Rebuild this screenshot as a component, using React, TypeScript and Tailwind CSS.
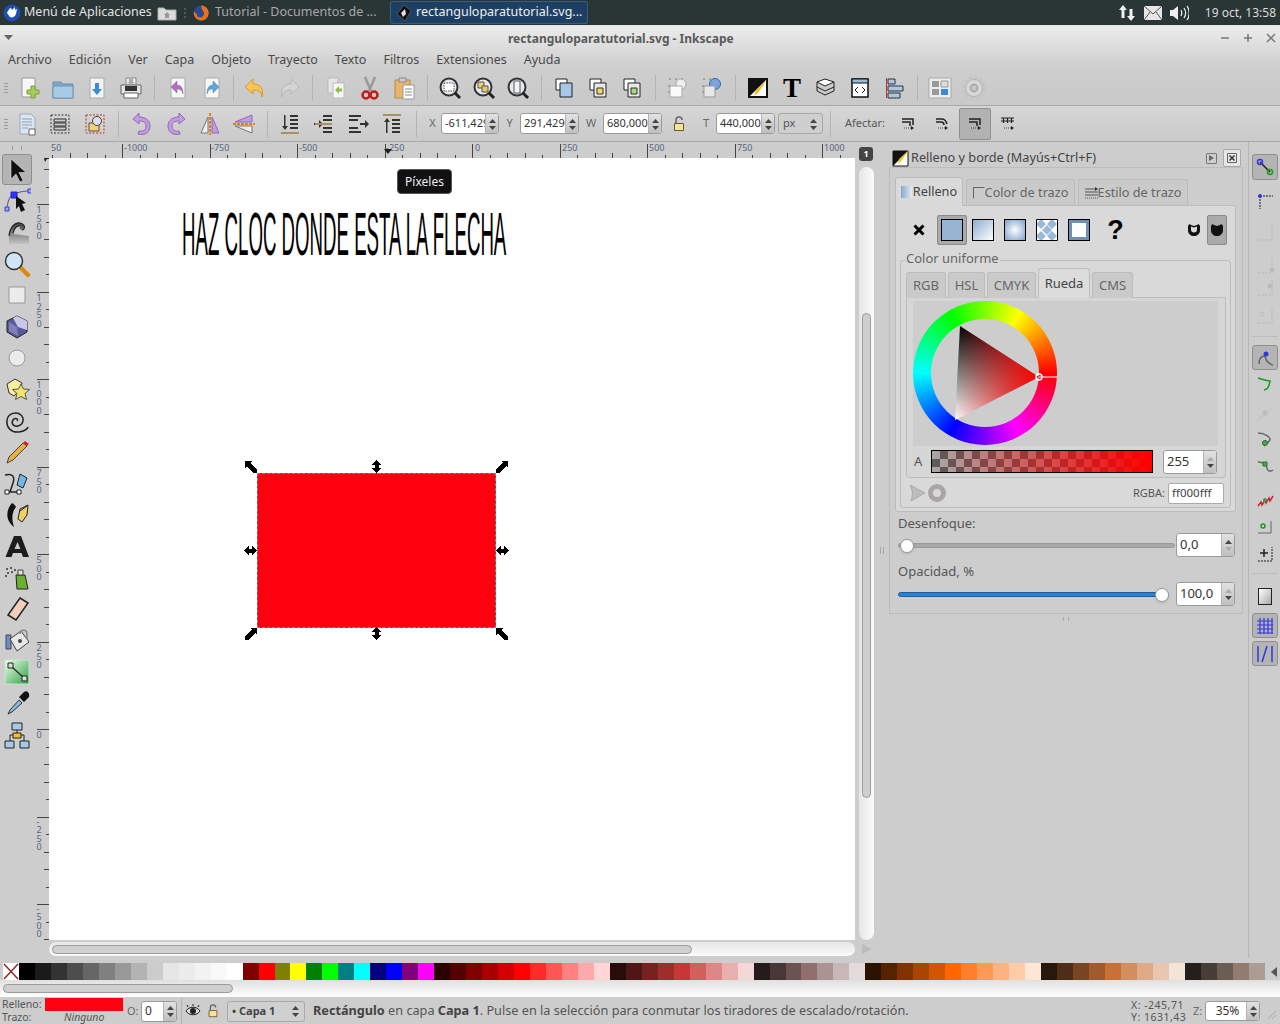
import React from 'react';

const Ic = ({ s = 24, children }: { s?: number; children: React.ReactNode }) => (
  <svg width={s} height={s} viewBox={`0 0 ${s} ${s}`} className="block shrink-0">{children}</svg>
);

const Tool = ({ children, w = 'w-[34px]' }: { children: React.ReactNode; w?: string }) => (
  <div className={`${w} h-full flex items-center justify-center shrink-0`}>{children}</div>
);

const Sep = ({ w = 'w-[12px]' }: { w?: string }) => (
  <div className={`${w} h-full flex items-center justify-center shrink-0`}>
    <div className="w-px h-[26px] bg-[#b4b4b4]" />
  </div>
);

const Grip = () => (
  <div className="w-[12px] shrink-0 flex flex-col gap-[2px] items-center">
    <div className="w-[4px] h-px bg-[#9a9a9a]" />
    <div className="w-[4px] h-px bg-[#9a9a9a]" />
    <div className="w-[4px] h-px bg-[#9a9a9a]" />
    <div className="w-[4px] h-px bg-[#9a9a9a]" />
  </div>
);

const Arrows = ({ dim = '' }: { dim?: string }) => (
  <svg width="9" height="16" viewBox="0 0 9 16" className="block">
    <path d="M4.5 3 L8 7 H1 Z" fill={dim === 'up' ? '#aaa' : '#444'} />
    <path d="M1 10 H8 L4.5 14 Z" fill={dim === 'down' ? '#aaa' : '#444'} />
  </svg>
);

const Spin = ({ text, w, h = 'h-[21px]', dim = '', cls = 'text-[11px]' }: { text: string; w: string; h?: string; dim?: string; cls?: string }) => (
  <div className={`${w} ${h} flex border border-[#9b9b9b] rounded-[3px] overflow-hidden shrink-0 bg-white`}>
    <div className={`flex-1 min-w-0 overflow-hidden whitespace-nowrap pl-[3px] flex items-center text-[#333] ${cls}`}>{text}</div>
    <div className="w-[13px] shrink-0 border-l border-[#b5b5b5] bg-gradient-to-b from-[#e2e2e2] to-[#bfbfbf] flex items-center justify-center">
      <Arrows dim={dim} />
    </div>
  </div>
);

// top toolbar icons
const NewDoc = () => (
  <Ic><path d="M5 2h13v19H5z" fill="#f7f7f7" stroke="#9a9a9a" /><path d="M14 12h4v4h4v4h-4v4h-4v-4h-4v-4h4z" transform="translate(0 -2)" fill="#a6cf5a" stroke="#7d9e3a" /></Ic>
);
const Folder = () => (
  <Ic><path d="M2 6h8l2 2h10v14H2z" fill="#7ba8cc" stroke="#6a8eaa" /><path d="M2 10h20v12H2z" fill="#a9cbe4" stroke="#6d94b3" /></Ic>
);
const Save = () => (
  <Ic><path d="M5 2h14v20H5z" fill="#f4f4f4" stroke="#aaa" /><path d="M10 7h4v6h3l-5 6-5-6h3z" fill="#3c8ad8" /></Ic>
);
const Printer = () => (
  <Ic><path d="M7 2h10v7H7z" fill="#eee" stroke="#888" /><path d="M2 9h20v9H2z" fill="#e4e4e4" stroke="#666" /><path d="M6 10h12v5H6z" fill="#333" /><path d="M5 17h14v5H5z" fill="#fff" stroke="#666" /><path d="M10 3h4v3h2l-4 3-4-3h2z" fill="#aaa" /></Ic>
);
const DocArrow = ({ c, flip }: { c: string; flip?: boolean }) => (
  <Ic><path d="M5 2h14v20H5z" fill="#f6f6f6" stroke="#aaa" /><path d={flip ? 'M13 5l6 6-6 6v-4c-3 0-5 1-6 5 0-6 2-9 6-9z' : 'M11 5l-6 6 6 6v-4c3 0 5 1 6 5 0-6-2-9-6-9z'} fill={c} stroke="#666" strokeWidth=".4" /></Ic>
);
const Undo = () => (
  <Ic><path d="M10 3L2 11l8 7v-4c5 0 8 1 9 7 2-7-1-13-9-13z" fill="#f7c456" stroke="#d59a2a" /></Ic>
);
const Redo = () => (
  <Ic><path d="M14 3l8 8-8 7v-4c-5 0-8 1-9 7-2-7 1-13 9-13z" fill="#d4d4d4" stroke="#b8b8b8" /></Ic>
);
const Duplicate = () => (
  <Ic><path d="M4 2h10v15H4z" fill="#e6e6e6" stroke="#bbb" /><path d="M9 7h11v15H9z" fill="#f7f7f7" stroke="#bbb" /><path d="M11 14l4-4v2.500h3v3h-3V18z" fill="#8cc04a" /></Ic>
);
const Scissors = () => (
  <Ic><path d="M7 1l6 14M17 1l-6 14" stroke="#999" strokeWidth="2.500" /><circle cx="8" cy="19" r="3.500" fill="none" stroke="#c41a1a" strokeWidth="2.500" /><circle cx="16" cy="19" r="3.500" fill="none" stroke="#c41a1a" strokeWidth="2.500" /></Ic>
);
const Paste = () => (
  <Ic><path d="M3 4h15v18H3z" fill="#e9b56a" stroke="#b78a44" /><path d="M7 2h7v4H7z" fill="#ccc" stroke="#888" /><path d="M11 9h11v14H11z" fill="#fff" stroke="#999" /><path d="M13 13h7M13 16h7M13 19h7" stroke="#888" /></Ic>
);
const Zoom = ({ children }: { children: React.ReactNode }) => (
  <Ic>
    <circle cx="11" cy="11" r="8.500" fill="#e4eaf0" stroke="#333" strokeWidth="2" />
    {children}
    <path d="M17 17l5 5" stroke="#222" strokeWidth="3" />
  </Ic>
);
const Stack = ({ c, mark }: { c: string; mark?: string }) => (
  <Ic>
    <path d="M4 3h11v11H4z" fill="#fff" stroke="#222" />
    <path d="M8 7h12v14H8z" fill={c} stroke="#222" />
    {mark && <path d="M11 12h6v6h-6z" fill={mark} stroke="#333" />}
  </Ic>
);
const Gear = () => (
  <Ic>
    <circle cx="12" cy="12" r="8.500" fill="#d8d8d8" stroke="#b4b4b4" />
    <circle cx="12" cy="12" r="10.500" fill="none" stroke="#c4c4c4" strokeWidth="2.500" strokeDasharray="3.500 2" />
    <circle cx="12" cy="12" r="3.500" fill="#c8c8c8" stroke="#a4a4a4" strokeWidth="1.500" />
  </Ic>
);

// second toolbar
const Rotate = ({ flip }: { flip?: boolean }) => (
  <Ic>
    <g transform={flip ? 'translate(24 0) scale(-1 1)' : undefined}>
      <path d="M9 1L3 7l6 5V9c4 0 7 1 7 5s-3 6-7 5l-1 3c7 2 12-2 12-8S15 5 9 5z" fill="#c29be0" stroke="#8f6bb3" />
    </g>
  </Ic>
);
const AlignI = ({ flip }: { flip?: boolean }) => (
  <Ic>
    <g fill="#333" transform={flip ? 'translate(0 24) scale(1 -1)' : undefined}>
      <path d="M12 3h8v2h-8zM12 7h8v2h-8zM12 11h8v2h-8zM12 15h8v2h-8z" />
      <path d="M6 3h1.500v11H10l-3 4-3-4h2z" />
      <path d="M3 20h18v2H3z" fill="#a89060" />
    </g>
  </Ic>
);
const Lock = ({ s = 16 }: { s?: number }) => (
  <svg width={s} height={s} viewBox="0 0 16 16" className="block shrink-0">
    <path d="M5 7V4a3 3 0 0 1 6 0" fill="none" stroke="#666" strokeWidth="1.500" />
    <path d="M3.500 7.500h9v7h-9z" fill="#f4e4a0" stroke="#6a5a20" />
  </svg>
);
const Affect = ({ grid, curve }: { grid?: boolean; curve?: boolean }) => (
  <Ic s={16}>
    {grid ? (
      <path d="M1 2h13M1 5h13M3.500 2v5M7.500 2v5M11.500 2v5" stroke="#222" strokeWidth="1.200" />
    ) : (
      <>
        <path d={curve ? 'M2 3h6c3 0 4 2 5 5' : 'M2 3h11v6'} fill="none" stroke="#222" strokeWidth="1.500" />
        <path d={curve ? 'M2 6h5c2 0 3 1 3 3' : 'M2 6h8v4'} fill="none" stroke="#222" strokeWidth="1.500" />
      </>
    )}
    <path d="M4 12h7" stroke="#444" strokeDasharray="1 1" />
    <path d="M11 10l3 2-3 2z" fill="#222" />
  </Ic>
);

// left tools
const toolIcons: React.ReactNode[] = [
  <Ic s={26} key="sel"><path d="M7 2v20l5-5 4 8 3-1.500-4-8h7z" fill="#111" stroke="#eee" strokeWidth=".5" /></Ic>,
  <Ic s={28} key="node"><path d="M4 22C5 12 7 8 12 7c4-2 8-3 15-3" fill="none" stroke="#555" /><path d="M8 5h6v6H8z" fill="#33f" stroke="#22c" /><path d="M2 20h4v4H2zM25 2h4v4h-4z" fill="#aab" stroke="#33f" /><path d="M13 9l10 7-4 1 3 6-4 2-2-6-3 3z" fill="#111" /></Ic>,
  <Ic s={28} key="tweak"><defs><linearGradient id="tw" x1="0" y1="0" x2="0" y2="1"><stop offset="0" stopColor="#444" /><stop offset="1" stopColor="#c4c4c4" /></linearGradient></defs><path d="M6 18C7 9 12 4 17 5c5 1 6 6 2 7-3 0-3-3-1-4-4-1-7 3-7 8l15 2v8H6z" fill="url(#tw)" /><path d="M6 18C7 9 12 4 17 5c5 1 6 6 2 7M10 15C11 10 14 7 18 8" fill="none" stroke="#222" strokeWidth="1.200" /></Ic>,
  <Ic s={28} key="zoom"><path d="M17 17l8 8" stroke="#d98a10" strokeWidth="4.500" strokeLinecap="round" /><circle cx="11" cy="11" r="8.500" fill="#d2e4f7" stroke="#333" strokeWidth="1.500" /></Ic>,
  <Ic s={22} key="rect"><path d="M3 3h16v16H3z" fill="#ececec" stroke="#999" /></Ic>,
  <Ic s={26} key="box"><path d="M13 2l10 5v11l-10 6-10-6V7z" fill="#5a5a9a" stroke="#222" /><path d="M13 2l10 5v9l-9-3-5-9z" fill="#c8c8e8" /><path d="M5 8l8 5 1 9-9-5z" fill="#8080b8" /></Ic>,
  <Ic s={22} key="circle"><circle cx="11" cy="11" r="8" fill="#ececec" stroke="#999" /></Ic>,
  <Ic s={26} key="star"><path d="M3 8l8-5 7 4-1 5-7 8-5-3z" fill="#f8f0a0" stroke="#333" /><path d="M17 8l2.500 5 6 .5-4.500 4 1.500 6-5.500-3-5.500 3 1.500-6-4.500-4 6-.5z" fill="#f4e46c" stroke="#555" /></Ic>,
  <Ic s={26} key="spiral"><path d="M13 13c2-2-2-4-4-1s0 7 5 6 7-7 3-11S4 5 3 12s4 13 12 12 9-5 9-5" fill="none" stroke="#222" strokeWidth="1.500" /></Ic>,
  <Ic s={26} key="pencil"><path d="M3 24l2-6L19 4l4 3L9 21z" fill="#e8b040" stroke="#444" /><path d="M19 4l2-2 4 3-2 2z" fill="#d22" /></Ic>,
  <Ic s={28} key="pen"><path d="M2 5c8-2 10 2 8 8s-3 9-3 9h8" fill="none" stroke="#222" strokeWidth="1.500" /><path d="M2 20h4v4H2zM14 20h4v4h-4z" fill="#fff" stroke="#222" /><path d="M17 4l7 4-4 10-6-3z" fill="#6fb8e8" stroke="#222" /></Ic>,
  <Ic s={28} key="callig"><path d="M9 2C2 10 3 20 11 26c-2-6-3-14 2-20C12 4 11 3 9 2z" fill="#111" /><path d="M15 18l2-10 8-4-1 10-5 7z" fill="#f0d060" stroke="#222" /><path d="M17 10l7-5" stroke="#222" /></Ic>,
  <Ic s={28} key="text"><path d="M11 4h7l8 21h-6l-1.500-4H10l-1.500 4H2.500z" fill="#1c1c1c" /><path d="M14.500 10l-3 7h6z" fill="#c8c8c8" /></Ic>,
  <Ic s={28} key="spray"><g fill="#333"><circle cx="4" cy="5" r="1" /><circle cx="8" cy="4" r="1" /><circle cx="5" cy="9" r="1" /><circle cx="9" cy="8" r="1" /><circle cx="12" cy="6" r="1" /><circle cx="3" cy="12" r="1" /></g><path d="M13 11h9l3 14h-11z" fill="#6cb030" stroke="#222" /><path d="M15 6h5v5h-5z" fill="#e0e0e0" stroke="#444" /></Ic>,
  <Ic s={26} key="eraser"><path d="M16 2l8 5-12 17-8-5z" fill="#f4cdbd" stroke="#222" strokeWidth="1.500" /></Ic>,
  <Ic s={28} key="bucket"><path d="M3 8h5v14H3z" fill="#6a90c0" stroke="#445" /><path d="M7 12l11-8 8 11-12 9z" fill="#e8e8e8" stroke="#444" /><circle cx="17" cy="14" r="2" fill="#444" /><path d="M17 7c0-5 7-5 7 0v5" fill="none" stroke="#888" strokeWidth="1.500" /></Ic>,
  <Ic s={28} key="grad"><defs><linearGradient id="gr" x1="0" y1="0" x2="1" y2="1"><stop offset="0" stopColor="#f0fff0" /><stop offset="1" stopColor="#28a040" /></linearGradient></defs><path d="M2 2h24v24H2z" fill="url(#gr)" stroke="#c8e8c8" /><path d="M8 8l13 12" stroke="#333" strokeWidth="1.500" /><path d="M5 5h5v5H5zM19 18h5v5h-5z" fill="#ddd" stroke="#222" /></Ic>,
  <Ic s={26} key="drop"><path d="M15 10l-9 10-2 4 4-2 10-9z" fill="#88b8e8" stroke="#333" /><path d="M15 7l5 5 5-5c1-4-2-7-5-5z" fill="#111" /></Ic>,
  <Ic s={28} key="conn"><path d="M14 8v6M7 20v-6h14v6" fill="none" stroke="#222" /><path d="M9 2h10v7H9z" fill="#a8c8e8" stroke="#222" /><path d="M10 12h8v5h-8z" fill="#f4c020" stroke="#222" /><path d="M2 20h9v7H2zM17 20h9v7h-9z" fill="#a8c8e8" stroke="#222" /></Ic>,
];

// right snap bar
const snapBlue = '#3434e0';
const SnapCorner = ({ node }: { node?: React.ReactNode }) => (
  <Ic s={20}>
    <path d="M3 18h14V3" fill="none" stroke="#bcbcbc" strokeWidth="1.500" strokeDasharray="2 1.500" />
    {node}
  </Ic>
);
const Arc = ({ d, stroke = '#1a9a1a', node }: { d: string; stroke?: string; node?: React.ReactNode }) => (
  <Ic s={20}>
    <path d={d} fill="none" stroke={stroke} strokeWidth="1.500" />
    {node}
  </Ic>
);

const SnapBtn = ({ y, children, on }: { y: string; children: React.ReactNode; on?: boolean }) => (
  <div className={`${y} w-[26px] flex items-center justify-center rounded-[3px] shrink-0 ${on ? 'bg-[#b4b4b4] border border-[#8f8f8f]' : ''}`}>
    {children}
  </div>
);

const Ruler = () => {
  const ticks: React.ReactNode[] = [];
  for (let i = -4; i < 44; i++) {
    const x = 73 + i * 17.5;
    const top = i % 5 === 0 ? 2 : i % 5 === 1 || i % 5 === -4 || i % 5 === 4 || i % 5 === -1 ? 13 : 11;
    ticks.push(<path key={i} d={`M${Math.round(x) + 0.5} ${top}V16`} stroke="#444" />);
  }
  const labels = [['50', 2], ['-1000', 75], ['-750', 162], ['-500', 250], ['-250', 337], ['0', 426], ['250', 513], ['500', 600], ['750', 688], ['1000', 775]] as const;
  return (
    <svg width="806" height="16" className="block">
      {ticks}
      {labels.map(([t, x]) => (
        <text key={t} x={x} y="9" fontSize="9" fill="#5a6680" fontFamily="Noto Sans">{t}</text>
      ))}
      <path d="M335 7h8l-4 5z" fill="#222" />
    </svg>
  );
};

const VRuler = () => {
  const ticks: React.ReactNode[] = [];
  for (let i = -2; i < 44; i++) {
    const y = 46 + i * 17.5;
    const left = i % 5 === 0 ? 4 : i % 5 === 1 || i % 5 === -1 || i % 5 === 4 || i % 5 === -4 ? 13 : 11;
    ticks.push(<path key={i} d={`M${left} ${Math.round(y) + 0.5}H16`} stroke="#444" />);
  }
  const labels: [string, number][] = [['1500', 46], ['1250', 134], ['1000', 221], ['750', 309], ['500', 396], ['250', 484], ['0', 571], ['-250', 659], ['-500', 746]];
  return (
    <svg width="16" height="782" className="block shrink-0">
      {ticks}
      {labels.map(([t, y]) => {
        const start = t.startsWith('-') ? y + 7.5 : y + 9;
        const xs = t.split('').map(() => '3.500').join(' ');
        const ys = t.split('').map((_, i) => start + i * 8.5).join(' ');
        return <text key={t} x={xs} y={ys} fontSize="9" fill="#5a6680" fontFamily="Noto Sans">{t}</text>;
      })}
      <path d="M11 0h5v1l-2 0-2 3z" fill="#222" />
    </svg>
  );
};

const HandleDiag = ({ flip, cls }: { flip?: boolean; cls: string }) => (
  <div className={`absolute ${cls}`}>
    <svg width="12" height="12" viewBox="0 0 12 12" className="block" shapeRendering="crispEdges">
      <g transform={flip ? 'translate(12 0) scale(-1 1)' : undefined}>
        <path d="M0 0H7L5 2 12 8V12H8L2 5 0 7Z" fill="#000" />
      </g>
    </svg>
  </div>
);
const HandleV = ({ cls, horiz }: { cls: string; horiz?: boolean }) => (
  <div className={`absolute ${cls}`}>
    <svg width="13" height="13" viewBox="0 0 13 13" className="block" shapeRendering="crispEdges">
      <g transform={horiz ? 'rotate(90 6.500 6.500)' : undefined}>
        <path d="M6.500 0L11 4V5H8.500V8H11V9L6.500 13 2 9V8H4.500V5H2V4Z" fill="#000" />
      </g>
    </svg>
  </div>
);

const palette = [
  '#000000', '#1a1a1a', '#333333', '#4d4d4d', '#666666', '#808080', '#999999', '#b3b3b3', '#cccccc', '#e6e6e6', '#ececec', '#f2f2f2', '#f9f9f9', '#ffffff',
  '#800000', '#ff0000', '#808000', '#ffff00', '#008000', '#00ff00', '#008080', '#00ffff', '#000080', '#0000ff', '#800080', '#ff00ff',
  '#2b0000', '#550000', '#800000', '#aa0000', '#d40000', '#ff0000', '#ff2a2a', '#ff5555', '#ff8080', '#ffaaaa', '#ffd5d5',
  '#280b0b', '#501616', '#782121', '#a02c2c', '#c83737', '#d35f5f', '#de8787', '#e9afaf', '#f4d7d7',
  '#241c1c', '#483737', '#6c5353', '#916f6f', '#ac9393', '#c8b7b7', '#e3dbdb',
  '#2b1100', '#552200', '#803300', '#aa4400', '#d45500', '#ff6600', '#ff7f2a', '#ff9955', '#ffb380', '#ffccaa', '#ffe6d5',
  '#28170b', '#502d16', '#784421', '#a05a2c', '#c87137', '#d38d5f', '#deaa87', '#e9c6af', '#f4e3d7',
  '#241f1c', '#483e37', '#6c5d53', '#917c6f', '#ac9d93',
];

const menus = ['Archivo', 'Edición', 'Ver', 'Capa', 'Objeto', 'Trayecto', 'Texto', 'Filtros', 'Extensiones', 'Ayuda'];

const FillBtn = ({ children }: { children: React.ReactNode }) => (
  <div className="w-[32px] h-full flex items-center justify-center shrink-0">{children}</div>
);

const SubTab = ({ w, label, active }: { w: string; label: string; active?: boolean }) => (
  <div className={`${w} flex items-center justify-center rounded-t-[3px] border border-b-0 border-[#bcbcbc] text-[13px] shrink-0 ${active ? 'h-[30px] bg-[#dcdcdc] text-[#444]' : 'h-[26px] bg-[#cacaca] text-[#666]'}`}>
    {label}
  </div>
);

export default function App() {
  return (
    <div className="w-[1280px] h-[1024px] overflow-hidden flex flex-col bg-[#cdcdcd] text-[#444] font-['Noto_Sans',sans-serif]">
      {/* desktop panel */}
      <div className="h-[27px] shrink-0 bg-[#2a3535] border-b-2 border-[#e8e8e8] flex items-center text-[12.500px] text-[#e4e4e4] relative">
        <div className="w-[24px] flex justify-center shrink-0">
          <svg width="18" height="18" viewBox="0 0 18 18"><circle cx="9" cy="9" r="8.500" fill="#1e4fb0" /><path d="M4 9c1-3 3-5 4-5l1 2 3-3 0 3 2-1-1 5c-1 3-4 4-6 3z" fill="#fff" /></svg>
        </div>
        <span className="w-[133px] shrink-0 whitespace-nowrap">Menú de Aplicaciones</span>
        <svg width="20" height="16" viewBox="0 0 20 16" className="shrink-0"><path d="M1 3h6l2 2h10v10H1z" fill="#dcdcdc" stroke="#aaa" /><path d="M10 7l3 3h-1v3H8v-3H7z" fill="#999" /></svg>
        <div className="w-[16px] shrink-0 flex justify-center"><div className="w-[2px] h-[10px] border-l-2 border-dotted border-[#555]" /></div>
        <div className="w-[22px] shrink-0">
          <svg width="16" height="16" viewBox="0 0 16 16"><circle cx="8" cy="8" r="7.500" fill="#2a4a90" /><path d="M8 .5A7.500 7.500 0 1 1 1 6c1 3 3 2 3 4s3 3 5 2 3-4 1-6-1-4-2-5.500z" fill="#e8721c" /></svg>
        </div>
        <span className="w-[175px] shrink-0 whitespace-nowrap text-[#a9a9a9]">Tutorial - Documentos de ...</span>
        <div className="h-[23px] w-[198px] bg-[#1d3f63] border border-[#3b5b80] rounded-[2px] flex items-center text-[#efefef] shrink-0">
          <div className="w-[25px] flex justify-center shrink-0">
            <svg width="16" height="16" viewBox="0 0 16 16"><path d="M8 0l7 6-6 10-8-7z" fill="#111" stroke="#888" strokeWidth=".5" /><path d="M5 8l4-4 1 5-3 3z" fill="#ddd" /></svg>
          </div>
          <span className="whitespace-nowrap">rectanguloparatutorial.svg...</span>
        </div>
        <div className="ml-auto flex items-center">
          <svg width="18" height="18" viewBox="0 0 18 18"><path d="M5 1L1 6h2.500v8h3V6H9zM13 17l4-5h-2.500V5h-3v7H9z" fill="#f0f0f0" /></svg>
          <svg width="18" height="14" viewBox="0 0 18 14" className="ml-[8px]"><path d="M0 0h18v14H0z" fill="#e6e6e6" /><path d="M0 0l9 8 9-8M0 14l6-8M18 14l-6-8" fill="none" stroke="#555" /></svg>
          <svg width="20" height="16" viewBox="0 0 20 16" className="ml-[7px]"><path d="M1 5h3l5-4v14l-5-4H1z" fill="#f0f0f0" /><path d="M12 5c1 2 1 4 0 6M15 3c2 3 2 7 0 10M18 1c3 4 3 10 0 14" fill="none" stroke="#f0f0f0" strokeWidth="1.200" /></svg>
          <span className="ml-[16px] mr-[4px] text-[12px] text-[#dcdcdc] whitespace-nowrap">19 oct, 13:58</span>
        </div>
      </div>

      {/* title + menu + toolbar share a gradient */}
      <div className="shrink-0 bg-gradient-to-b from-[#ececec] via-[#cecece] to-[#c9c9c9]">
        <div className="h-[22px] flex items-center relative">
          <svg width="12" height="8" viewBox="0 0 12 8" className="ml-[3px] shrink-0"><path d="M1 1h9L5.500 6z" fill="#666" /></svg>
          <span className="absolute left-[508px] mt-[1px] text-[12px] font-bold text-[#5a5a5a] whitespace-nowrap">rectanguloparatutorial.svg - Inkscape</span>
          <div className="ml-auto flex items-center gap-[13px] mr-[4px] text-[#777]">
            <svg width="10" height="10" viewBox="0 0 10 10"><path d="M1 5h8" stroke="#777" strokeWidth="1.500" /></svg>
            <svg width="10" height="10" viewBox="0 0 10 10"><path d="M1 5h8M5 1v8" stroke="#777" strokeWidth="1.500" /></svg>
            <svg width="10" height="10" viewBox="0 0 10 10"><path d="M1 1l8 8M9 1L1 9" stroke="#777" strokeWidth="1.500" /></svg>
          </div>
        </div>
        <div className="h-[22px] flex items-center pl-[8px] gap-[17px] text-[12.500px] text-[#4a4a4a]">
          {menus.map(m => <span key={m}>{m}</span>)}
        </div>
        <div className="h-[35px] flex items-center border-b border-[#a9a9a9]">
          <Grip />
          <Tool><NewDoc /></Tool>
          <Tool><Folder /></Tool>
          <Tool><Save /></Tool>
          <Tool><Printer /></Tool>
          <Sep w="w-[13px]" />
          <Tool><DocArrow c="#b86cc8" /></Tool>
          <Tool><DocArrow c="#55a8e8" flip /></Tool>
          <Sep w="w-[9px]" />
          <Tool><Undo /></Tool>
          <Tool><Redo /></Tool>
          <Sep w="w-[13px]" />
          <Tool><Duplicate /></Tool>
          <Tool><Scissors /></Tool>
          <Tool><Paste /></Tool>
          <Sep />
          <Tool><Zoom><path d="M6 7h10v8H6z" fill="#fff" stroke="#555" strokeDasharray="1.500 1" /></Zoom></Tool>
          <Tool><Zoom><path d="M6 6h6v6H6z" fill="#f0d070" stroke="#555" /><path d="M10 10h6v6h-6z" fill="#e8c860" stroke="#555" /></Zoom></Tool>
          <Tool><Zoom><path d="M8 5h6v12H8z" fill="#f4f4f4" stroke="#555" /></Zoom></Tool>
          <Sep />
          <Tool><Stack c="#a8c8e8" /></Tool>
          <Tool><Stack c="#e8e8e8" mark="#f4d860" /></Tool>
          <Tool><Stack c="#e8e8e8" mark="#a8d878" /></Tool>
          <Sep />
          <Tool><Ic><path d="M3 3h2M9 3h2M3 9v2M3 15v2M15 3h2" stroke="#777" /><circle cx="15" cy="8" r="5" fill="#f0f0f0" stroke="#aaa" /><path d="M4 10h12v11H4z" fill="#fafafa" stroke="#aaa" /></Ic></Tool>
          <Tool><Ic><path d="M3 3h2M9 3h2M3 9v2M3 15v2" stroke="#777" /><circle cx="15" cy="8" r="5.500" fill="#7ba4dc" stroke="#3c64a8" /><path d="M4 10h11v11H4z" fill="#e8e8e8" stroke="#999" /></Ic></Tool>
          <Sep />
          <Tool><Ic><path d="M3 3h18v18H3z" fill="#fff" stroke="#111" strokeWidth="2" /><path d="M3 21V3h18z" fill="#111" /><path d="M21 4l-9 13-4 3 2-6z" fill="#f0c020" /></Ic></Tool>
          <Tool><span className="font-['Liberation_Serif',serif] font-bold text-[27px] leading-none text-black">T</span></Tool>
          <Tool><Ic><path d="M3 6l8-3 9 3-9 4z" fill="#fff" stroke="#222" /><path d="M3 11l8 4 9-4M3 15l8 4 9-4M3 6v9M20 6v9" fill="none" stroke="#222" /></Ic></Tool>
          <Tool><Ic><path d="M4 3h16v18H4z" fill="#fff" stroke="#111" strokeWidth="1.500" /><path d="M4 3h16v4H4z" fill="#9ab8d8" stroke="#111" /><path d="M10 11l-3 3 3 3M14 11l3 3-3 3" fill="none" stroke="#222" /></Ic></Tool>
          <Tool><Ic><path d="M4.500 2v20" stroke="#c03030" /><path d="M6 3h7v5H6zM6 10h15v5H6zM6 17h12v5H6z" fill="#a8c8e8" stroke="#333" /></Ic></Tool>
          <Sep />
          <Tool><Ic><path d="M1 2h22v20H1z" fill="#ececec" stroke="#aaa" /><path d="M4 5h7v6H4zM4 13h7v6H4z" fill="#999" /><path d="M13 5h7v6h-7z" fill="#ddd" stroke="#999" /><path d="M13 13h7v6h-7z" fill="#3c8ad8" /></Ic></Tool>
          <Tool><Gear /></Tool>
        </div>
      </div>

      {/* commands bar */}
      <div className="h-[36px] shrink-0 flex items-center bg-gradient-to-b from-[#d6d6d6] to-[#cacaca] border-b border-[#a8a8a8]">
        <Grip />
        <Tool w="w-[30px]"><Ic><path d="M5 2h11l4 4v16H5z" fill="#dde6f0" stroke="#9ab" /><path d="M7 7h10M7 10h10M7 13h10M7 16h6" stroke="#8aa0b8" /><path d="M14 17h6v6h-6z" fill="#fff" stroke="#666" /></Ic></Tool>
        <Tool w="w-[36px]"><Ic><path d="M3 3h18v18H3z" fill="none" stroke="#333" strokeDasharray="2 1.500" /><path d="M6 7h12v3H6zM6 11h12v3H6zM6 15h12v3H6z" fill="#ccc" stroke="#333" /></Ic></Tool>
        <Tool><Ic><path d="M3 3h18v18H3z" fill="none" stroke="#c03030" strokeDasharray="2 1.500" /><path d="M6 11h10v8H6z" fill="#f0d070" stroke="#555" /><circle cx="14" cy="9" r="4.500" fill="#dde" stroke="#444" /></Ic></Tool>
        <Sep w="w-[13px]" />
        <Tool><Rotate /></Tool>
        <Tool><Rotate flip /></Tool>
        <Tool><Ic><path d="M12 1v22" stroke="#e08020" strokeWidth="2" strokeDasharray="3 1" /><path d="M10 5v16H3z" fill="#eee" stroke="#777" /><path d="M14 5v16h7z" fill="#c29be0" stroke="#8f6bb3" /></Ic></Tool>
        <Tool><Ic><path d="M1 12h22" stroke="#e08020" strokeWidth="2" strokeDasharray="3 1" /><path d="M20 3v7H3z" fill="#c29be0" stroke="#8f6bb3" /><path d="M20 21v-7H3z" fill="#eee" stroke="#777" /></Ic></Tool>
        <Sep />
        <Tool><AlignI /></Tool>
        <Tool><Ic><g fill="#333"><path d="M11 3h9v2h-9zM11 7h9v2h-9zM11 15h9v2h-9zM11 19h9v2h-9z" /><path d="M2 11h5V8l4 4-4 4v-3H2z" /></g><path d="M3 11h17v2H3z" fill="#a89060" /></Ic></Tool>
        <Tool><Ic><g fill="#333"><path d="M3 3h12v2H3zM3 7h9v2H3zM3 15h9v2H3zM3 19h12v2H3z" /><path d="M14 11h5V8l4 4-4 4v-3h-5z" /></g></Ic></Tool>
        <Tool><AlignI flip /></Tool>
        <Sep w="w-[15px]" />
        <span className="w-[17px] shrink-0 text-[11px] text-[#666] text-center">X</span>
        <Spin text="-611,429" w="w-[58px]" />
        <span className="w-[21px] shrink-0 text-[11px] text-[#666] text-center">Y</span>
        <Spin text="291,429" w="w-[59px]" />
        <span className="w-[24px] shrink-0 text-[11px] text-[#666] text-center">W</span>
        <Spin text="680,000" w="w-[59px]" />
        <div className="w-[34px] flex justify-center shrink-0"><Lock /></div>
        <span className="w-[20px] shrink-0 text-[11px] text-[#666] text-center">T</span>
        <Spin text="440,000" w="w-[59px]" />
        <div className="w-[45px] h-[21px] ml-[3px] border border-[#a8a8a8] rounded-[3px] flex items-center justify-between px-[4px] text-[11px] text-[#555] shrink-0 bg-[#cfcfcf]">
          <span>px</span><Arrows />
        </div>
        <Sep w="w-[15px]" />
        <span className="w-[46px] ml-[7px] shrink-0 text-[11px] text-[#555] whitespace-nowrap">Afectar:</span>
        <Tool><Affect /></Tool>
        <Tool><Affect curve /></Tool>
        <div className="w-[32px] h-[32px] shrink-0 bg-[#b2b2b2] border border-[#8f8f8f] rounded-[2px] flex items-center justify-center"><Affect /></div>
        <Tool><Affect grid /></Tool>
      </div>

      {/* workspace */}
      <div className="h-[816px] shrink-0 flex">
        <div className="w-[33px] shrink-0 flex flex-col items-center">
          <div className="h-[12px] shrink-0 flex items-center"><div className="w-[10px] h-[4px] border-x border-[#999]" /></div>
          {toolIcons.map((icon, i) => (
            <div key={i} className={`h-[31.400px] w-[30px] shrink-0 flex items-center justify-center rounded-[3px] ${i === 0 ? 'bg-[#b4b4b4] border border-[#8f8f8f]' : ''}`}>
              {icon}
            </div>
          ))}
        </div>
        <div className="w-[822px] shrink-0 flex flex-col">
          <div className="h-[16px] flex shrink-0">
            <div className="w-[16px] shrink-0" />
            <Ruler />
          </div>
          <div className="h-[782px] flex shrink-0">
            <VRuler />
            {/* canvas */}
            <div className="w-[806px] h-[782px] bg-white relative overflow-hidden">
              <span className="absolute left-[133px] top-[46px] origin-top-left scale-x-[0.306] text-[61px] leading-[61px] text-black whitespace-nowrap font-['Liberation_Sans',sans-serif]">HAZ CLOC DONDE ESTA LA FLECHA</span>
              <div className="absolute left-[208px] top-[315px] w-[239px] h-[155px] bg-[#ff000f] border border-dashed border-[#6f8f90]" />
              <HandleDiag cls="left-[196px] top-[303px]" />
              <HandleV cls="left-[321px] top-[302px]" />
              <HandleDiag flip cls="left-[447px] top-[303px]" />
              <HandleV horiz cls="left-[195px] top-[386px]" />
              <HandleV horiz cls="left-[447px] top-[386px]" />
              <HandleDiag flip cls="left-[196px] top-[470px]" />
              <HandleV cls="left-[321px] top-[469px]" />
              <HandleDiag cls="left-[447px] top-[470px]" />
              <div className="absolute left-[348px] top-[11px] w-[55px] h-[25px] rounded-[4px] bg-[#111] border border-[#555] text-[12px] text-[#eee] flex items-center justify-center">Píxeles</div>
            </div>
          </div>
          <div className="h-[18px] shrink-0 flex items-center pl-[16px]">
            <div className="w-[806px] h-[14px] rounded-full bg-gradient-to-b from-[#e6e6e6] to-[#fbfbfb] flex items-center pl-[3px]">
              <div className="w-[640px] h-[9px] rounded-full bg-[#d0d0d0] border border-[#9c9c9c]" />
            </div>
          </div>
        </div>
        {/* vertical scrollbar */}
        <div className="w-[21px] shrink-0 flex flex-col items-start pl-[4px]">
          <div className="w-[14px] h-[14px] mt-[5px] bg-[#444] rounded-[3px] text-[9px] font-bold text-white flex items-center justify-center shrink-0">1</div>
          <div className="w-[15px] h-[773px] mt-[6px] rounded-full bg-gradient-to-r from-[#e6e6e6] to-[#fbfbfb] flex justify-center shrink-0">
            <div className="w-[9px] h-[485px] mt-[146px] rounded-full bg-[#cfcfcf] border border-[#9c9c9c]" />
          </div>
          <svg width="12" height="12" viewBox="0 0 12 12" className="mt-[3px] ml-[2px]"><path d="M1 1l10 5-10 5z" fill="#bbb" /></svg>
        </div>
        {/* dock handle */}
        <div className="w-[11px] shrink-0 flex items-center justify-center">
          <div className="w-[4px] h-[7px] border-x border-[#aaa]" />
        </div>
        {/* dock */}
        <div className="w-[358px] shrink-0 px-[2px] text-[13px]">
          <div className="h-[25px] flex items-end pb-[0px] pl-[3px]">
            <Ic s={18}><path d="M1 2h15v15H1z" fill="#fff" stroke="#111" /><path d="M1 17V2h15z" fill="#111" /><path d="M17 1l-8 11-3 3 1-5z" fill="#f0c020" /></Ic>
            <span className="ml-[1px] text-[12.700px] text-[#444] whitespace-nowrap">Relleno y borde (Mayús+Ctrl+F)</span>
            <div className="ml-auto flex items-center gap-[6px]">
              <div className="w-[11px] h-[11px] border border-[#777] rounded-[1px] flex items-center justify-center"><div className="border-l-[5px] border-y-[3px] border-y-transparent border-l-[#666]" /></div>
              <div className="w-[18px] h-[18px] border border-[#aaa] bg-[#e6e6e6] rounded-[2px] flex items-center justify-center mr-[2px]">
                <svg width="10" height="10" viewBox="0 0 10 10"><path d="M0.500 0.500h9v9h-9z" fill="none" stroke="#666" /><path d="M2.500 2.500l5 5M7.500 2.500l-5 5" stroke="#333" strokeWidth="1.500" /></svg>
              </div>
            </div>
          </div>
          <div className="h-[447px] border border-[#bcbcbc] bg-[#cdcdcd] pl-[5px] pt-[8px]">
            {/* tabs */}
            <div className="h-[29px] flex items-end gap-[3px] text-[12.700px]">
              <div className="w-[68px] h-[29px] bg-[#dadada] border border-b-0 border-[#bcbcbc] rounded-t-[3px] flex items-center justify-center relative z-10 mb-[-1px] text-[#444]">
                <div className="w-[11px] h-[12px] mr-[1px] bg-gradient-to-r from-[#8aa8cc] to-[#e6ecf2]" />Relleno
              </div>
              <div className="w-[109px] h-[26px] bg-[#cacaca] border border-b-0 border-[#bcbcbc] rounded-t-[3px] flex items-center justify-center text-[#666]">
                <div className="w-[12px] h-[12px] border border-[#666] border-r-[#ccc] border-b-[#ccc]" />Color de trazo
              </div>
              <div className="w-[110px] h-[26px] bg-[#cacaca] border border-b-0 border-[#bcbcbc] rounded-t-[3px] flex items-center justify-center text-[#666]">
                <svg width="13" height="12" viewBox="0 0 13 12"><path d="M0 2h10M0 5h13M0 8h13" stroke="#555" /><path d="M0 11h13" stroke="#555" strokeDasharray="1 1" /><path d="M10 0l3 2-3 2z" fill="#333" /></svg>Estilo de trazo
              </div>
            </div>
            {/* notebook body */}
            <div className="w-[341px] h-[307px] border border-[#bcbcbc] bg-[#d9d9d9] rounded-b-[3px] px-[4px] pt-[9px]">
              <div className="h-[30px] flex items-center">
                <div className="w-[37px] flex justify-center shrink-0">
                  <svg width="14" height="14" viewBox="0 0 14 14" className="ml-[1px]"><path d="M2.500 2.500l9 9M11.500 2.500l-9 9" stroke="#000" strokeWidth="3" /></svg>
                </div>
                <div className="w-[30px] h-[30px] shrink-0 bg-[#aaa] border border-[#8a8a8a] rounded-[2px] flex items-center justify-center">
                  <div className="w-[22px] h-[22px] bg-[#98b4d4] border border-black" />
                </div>
                <FillBtn><div className="w-[22px] h-[22px] bg-gradient-to-br from-[#8fadd0] to-white border border-black" /></FillBtn>
                <FillBtn><div className="w-[22px] h-[22px] bg-[radial-gradient(circle,#fff_0%,#8fadd0_85%)] border border-black" /></FillBtn>
                <FillBtn>
                  <svg width="22" height="22" viewBox="0 0 22 22" className="block">
                    <path d="M0 0h22v22H0z" fill="#fff" />
                    <path d="M5 0l5 5-5 5-5-5zM16 0l5 5-5 5-5-5zM11 6l5 5-5 5-5-5zM5 12l5 5-5 5-5-5zM16 12l5 5-5 5-5-5z" fill="#9ab8d8" />
                    <path d="M.5.500h21v21H.5z" fill="none" stroke="#000" />
                  </svg>
                </FillBtn>
                <FillBtn><div className="w-[22px] h-[22px] bg-[#6f8fb4] border border-black p-[3px]"><div className="w-full h-full bg-white" /></div></FillBtn>
                <div className="w-[36px] flex justify-center shrink-0 pl-[5px]"><span className="font-['Liberation_Sans',sans-serif] font-bold text-[27px] leading-none text-black">?</span></div>
                <div className="ml-auto flex items-center mr-[4px]">
                  <svg width="14" height="14" viewBox="0 0 14 14" className="mr-[6px]"><path d="M1 3c1-2 2-2 3-1l3 1 3-1c1-1 2-1 3 1v4c0 4-3 6-6 6s-6-2-6-6z" fill="#111" /><path d="M4 3.500l3 1 3-1v3a3 3 0 0 1-6 0z" fill="#d9d9d9" /></svg>
                  <div className="w-[20px] h-[30px] bg-[#aaa] border border-[#8a8a8a] rounded-[2px] flex items-center justify-center">
                    <svg width="14" height="14" viewBox="0 0 14 14"><path d="M1 3c1-2 2-2 3-1l3 1 3-1c1-1 2-1 3 1v4c0 4-3 6-6 6s-6-2-6-6z" fill="#111" /></svg>
                  </div>
                </div>
              </div>
              {/* frame */}
              <div className="relative mt-[15px] w-[331px] h-[248px] border border-[#bcbcbc] rounded-[3px] px-[5px] pt-[8px]">
                <span className="absolute left-[4px] top-[-12px] bg-[#d9d9d9] px-px leading-[18px] text-[#666]">Color uniforme</span>
                <div className="h-[29px] flex items-end gap-[2px] relative z-10 mb-[-1px]">
                  <SubTab w="w-[40px]" label="RGB" />
                  <SubTab w="w-[37px]" label="HSL" />
                  <SubTab w="w-[49px]" label="CMYK" />
                  <SubTab w="w-[52px]" label="Rueda" active />
                  <SubTab w="w-[41px]" label="CMS" />
                </div>
                <div className="w-[320px] h-[181px] border border-[#bcbcbc] rounded-b-[3px] bg-[#d6d6d6] px-[6px] pt-[3px]">
                  <div className="w-[305px] h-[145px] bg-[#cdcdcd] relative">
                    <div className="absolute left-0 top-0 w-[144px] h-[144px] rounded-full bg-[conic-gradient(from_90deg,#f00,#f0f,#00f,#0ff,#0f0,#ff0,#f00)]" />
                    <div className="absolute left-[18px] top-[18px] w-[108px] h-[108px] rounded-full bg-[#cdcdcd]" />
                    <svg width="150" height="145" viewBox="0 0 150 145" className="absolute left-0 top-0">
                      <defs>
                        <linearGradient id="bw" gradientUnits="userSpaceOnUse" x1="47" y1="25" x2="42" y2="119">
                          <stop offset="0" stopColor="#000" />
                          <stop offset="1" stopColor="#fff" />
                        </linearGradient>
                        <linearGradient id="rd" gradientUnits="userSpaceOnUse" x1="126" y1="76" x2="44" y2="72">
                          <stop offset="0" stopColor="#f00" stopOpacity="1" />
                          <stop offset="1" stopColor="#f00" stopOpacity="0" />
                        </linearGradient>
                      </defs>
                      <path d="M47 25L126 76 42 119z" fill="url(#bw)" />
                      <path d="M47 25L126 76 42 119z" fill="url(#rd)" />
                      <path d="M126 76h18" stroke="#fff" />
                      <circle cx="126" cy="76" r="3" fill="none" stroke="#fff" strokeWidth="1.500" />
                    </svg>
                  </div>
                  <div className="h-[25px] mt-[3px] flex items-center">
                    <span className="w-[18px] shrink-0 pl-[1px] text-[#555]">A</span>
                    <div className="w-[222px] h-[23px] border border-black bg-[repeating-conic-gradient(#5c5c5c_0_25%,#a8a8a8_0_50%)] bg-[length:16px_16px] shrink-0">
                      <div className="w-full h-full bg-gradient-to-r from-transparent to-[#ff0000]" />
                    </div>
                    <div className="ml-[10px]"><Spin text="255" w="w-[54px]" h="h-[24px]" dim="up" cls="text-[13px] pl-[1px]" /></div>
                  </div>
                </div>
                <div className="h-[28px] mt-[1px] flex items-center">
                  <div className="w-[22px] flex justify-center shrink-0">
                    <svg width="18" height="20" viewBox="0 0 18 20"><path d="M2 2l15 8-14 8c2-6 2-10-1-16z" fill="#bdbdbd" stroke="#aaa" /></svg>
                  </div>
                  <svg width="18" height="18" viewBox="0 0 18 18"><circle cx="9" cy="9" r="6.500" fill="none" stroke="#aaa5a5" strokeWidth="5" /></svg>
                  <span className="ml-auto text-[11px] text-[#555]">RGBA:</span>
                  <div className="w-[56px] h-[21px] ml-[3px] mr-[1px] bg-white border border-[#aaa] rounded-[2px] flex items-center pl-[3px] text-[11.500px] text-[#444]">ff000fff</div>
                </div>
              </div>
            </div>
            {/* blur and opacity */}
            <div className="w-[341px] pl-[3px] mt-[2px]">
              <div className="h-[20px] flex items-center text-[#555]">Desenfoque:</div>
              <div className="h-[24px] mt-[-1px] flex items-center">
                <div className="w-[278px] shrink-0">
                  <div className="w-[277px] h-[5px] rounded-full bg-[#a9a9a9] border border-[#999] relative">
                    <div className="absolute left-[1px] top-[-5px] w-[14px] h-[14px] rounded-full bg-white border border-[#999] shadow-sm" />
                  </div>
                </div>
                <Spin text="0,0" w="w-[59px]" h="h-[24px]" dim="down" cls="text-[13px]" />
              </div>
              <div className="h-[20px] mt-[5px] flex items-center text-[#555]">Opacidad, %</div>
              <div className="h-[24px] flex items-center">
                <div className="w-[278px] shrink-0">
                  <div className="w-[271px] h-[5px] rounded-full bg-[#2f7fd0] border border-[#1d5c9c] relative">
                    <div className="absolute left-[256px] top-[-5px] w-[14px] h-[14px] rounded-full bg-white border border-[#999] shadow-sm" />
                  </div>
                </div>
                <Spin text="100,0" w="w-[59px]" h="h-[24px]" dim="up" cls="text-[13px]" />
              </div>
            </div>
          </div>
          <div className="flex justify-center mt-[3px]"><div className="w-[6px] h-[4px] border-x border-[#aaa]" /></div>
        </div>
        {/* snap bar */}
        <div className="w-[32px] shrink-0 ml-[3px] border-l border-[#b6b6b6] pl-[3px] flex flex-col items-start">
          <div className="h-[12px] shrink-0" />
          <SnapBtn y="h-[26px]" on>
            <Ic s={20}><path d="M5 5l10 10" stroke="#222" strokeWidth="1.500" /><circle cx="5" cy="5" r="2.500" fill="none" stroke={snapBlue} strokeWidth="1.500" /><circle cx="15" cy="15" r="2.500" fill="none" stroke="#1a9a1a" strokeWidth="1.500" /></Ic>
          </SnapBtn>
          <SnapBtn y="h-[20px] mt-[10px]"><Ic s={20}><path d="M5 6h13M5 6v13" stroke="#555" strokeWidth="1.500" strokeDasharray="2 1" /><circle cx="5" cy="6" r="2" fill={snapBlue} /></Ic></SnapBtn>
          <SnapBtn y="h-[20px] mt-[12px]"><SnapCorner /></SnapBtn>
          <SnapBtn y="h-[20px] mt-[13px]"><SnapCorner node={<circle cx="17" cy="15" r="2.500" fill="#bbb" />} /></SnapBtn>
          <SnapBtn y="h-[20px] mt-[2px]"><SnapCorner node={<circle cx="15" cy="9" r="2.500" fill="#bbb" />} /></SnapBtn>
          <SnapBtn y="h-[20px] mt-[8px]"><SnapCorner node={<circle cx="7" cy="9" r="2" fill="none" stroke="#bbb" />} /></SnapBtn>
          <div className="w-[26px] h-px bg-[#bdbdbd] mt-[11px] shrink-0" />
          <SnapBtn y="h-[25px] mt-[8px]" on><Ic s={20}><path d="M4 16c0-6 3-8 6-8 1 5 4 8 8 9" fill="none" stroke="#666" strokeWidth="1.500" /><circle cx="11" cy="6" r="2.500" fill={snapBlue} /></Ic></SnapBtn>
          <SnapBtn y="h-[20px] mt-[4px]"><Arc d="M3 4c4 1 8 3 12 3-1 4-1 8-6 9" /></SnapBtn>
          <SnapBtn y="h-[20px] mt-[9px]"><Arc d="M3 17L18 4" stroke="#c4c4c4" node={<circle cx="10" cy="10" r="2.500" fill="#bbb" />} /></SnapBtn>
          <SnapBtn y="h-[20px] mt-[6px]"><Arc d="M3 4c8 0 12 5 12 6s-1 3-6 7" stroke="#666" node={<circle cx="10" cy="14" r="2.500" fill="#5aa05a" stroke="#1a7a1a" />} /></SnapBtn>
          <SnapBtn y="h-[20px] mt-[7px]"><Arc d="M3 6c6 0 9 3 9 6s3 4 6 2" stroke="#666" node={<path d="M8 6h4v4H8z" fill="#5aa05a" stroke="#1a7a1a" />} /></SnapBtn>
          <SnapBtn y="h-[20px] mt-[14px]"><Arc d="M3 16l3-4 1 3 3-5 1 3 3-5 1 3 3-5" stroke="#c62828" node={<circle cx="10" cy="10" r="2" fill="#3a9a5a" />} /></SnapBtn>
          <SnapBtn y="h-[20px] mt-[6px]"><Ic s={20}><path d="M3 17h13V5" fill="none" stroke="#666" /><circle cx="8" cy="10" r="2" fill="none" stroke="#1a9a1a" strokeWidth="1.500" /></Ic></SnapBtn>
          <SnapBtn y="h-[20px] mt-[7px]"><Ic s={20}><path d="M3 18h14V4" fill="none" stroke="#222" strokeDasharray="2 1" /><path d="M5 10h8M9 6v8" stroke="#222" strokeWidth="1.500" /></Ic></SnapBtn>
          <div className="w-[26px] h-px bg-[#bdbdbd] mt-[10px] shrink-0" />
          <SnapBtn y="h-[20px] mt-[12px]"><div className="w-[14px] h-[17px] bg-gradient-to-br from-white to-[#aaa] border border-[#222]" /></SnapBtn>
          <SnapBtn y="h-[25px] mt-[7px]" on><Ic s={20}><path d="M2 5h16M2 9h16M2 13h16M2 17h16M5 2v16M9 2v16M13 2v16M17 2v16" stroke={snapBlue} strokeWidth="1.200" /></Ic></SnapBtn>
          <SnapBtn y="h-[25px] mt-[3px]" on><Ic s={20}><path d="M3 2v16M17 2v16M12 2L7 18" stroke={snapBlue} strokeWidth="1.500" /></Ic></SnapBtn>
        </div>
      </div>

      {/* palette */}
      <div className="h-[22px] shrink-0 flex items-center pl-[3px] pt-[5px]">
        <svg width="16" height="17" viewBox="0 0 16 17" className="shrink-0"><path d="M0 0h16v17H0z" fill="#fff" /><path d="M1 1l14 15M15 1L1 16" stroke="#8b2a2a" strokeWidth="1.500" /></svg>
        <div className="w-[1245px] h-[17px] flex shrink-0">
          {palette.map((c, i) => (
            <div key={i} className="flex-1 h-full bg-[var(--c)]" style={{ '--c': c } as React.CSSProperties} />
          ))}
        </div>
        <svg width="8" height="10" viewBox="0 0 8 10" className="ml-[6px] shrink-0"><path d="M7 0v10L1 5z" fill="#555" /></svg>
      </div>

      {/* palette scroll */}
      <div className="h-[17px] shrink-0 bg-gradient-to-b from-[#e0e0e0] to-[#ffffff] pl-[3px] flex items-center">
        <div className="w-[230px] h-[9px] mt-[-1px] rounded-full bg-[#cfcfcf] border border-[#9c9c9c]" />
      </div>

      {/* status bar */}
      <div className="h-[26px] mt-[1px] shrink-0 flex items-center">
        <div className="w-[127px] shrink-0 relative text-[10.500px] text-[#555] leading-[13px] pl-[2px]">
          <div className="flex items-center h-[13px]"><span className="w-[43px]">Relleno:</span><div className="w-[78px] h-[13px] bg-[#ff000f]" /></div>
          <div className="flex items-center h-[13px]"><span className="w-[62px]">Trazo:</span><span className="italic">Ninguno</span></div>
        </div>
        <span className="w-[14px] text-[11px] text-[#666] shrink-0">O:</span>
        <Spin text="0" w="w-[36px]" cls="text-[12px]" />
        <Sep w="w-[9px]" />
        <div className="w-[14px] shrink-0 flex justify-center"><svg width="16" height="14" viewBox="0 0 16 14" className="shrink-0"><path d="M1 7c3-5 11-5 14 0-3 5-11 5-14 0z" fill="#ddd" stroke="#222" /><circle cx="8" cy="7" r="3" fill="#222" /><path d="M3 3L2 1M8 2V0M13 3l1-2" stroke="#222" /></svg></div>
        <div className="w-[26px] shrink-0 flex justify-center"><Lock s={14} /></div>
        <div className="w-[78px] h-[21px] ml-[1px] shrink-0 border border-[#a8a8a8] rounded-[3px] flex items-center justify-between px-[4px] bg-[#d0d0d0] text-[11px] font-bold text-[#444]">
          <span className="whitespace-nowrap">• Capa 1</span><Arrows />
        </div>
        <span className="ml-[8px] w-[818px] shrink-0 text-[12.700px] text-[#555] whitespace-nowrap">
          <b className="text-[#444]">Rectángulo</b> en capa <b className="text-[#444]">Capa 1</b>. Pulse en la selección para conmutar los tiradores de escalado/rotación.
        </span>
        <div className="w-[62px] shrink-0 text-[10.500px] leading-[12.500px] text-[#555] tracking-[0.500px] whitespace-nowrap">
          <div>X: -245,71</div><div>Y: 1631,43</div>
        </div>
        <span className="w-[12px] text-[11px] text-[#666] shrink-0">Z:</span>
        <Spin text="35%" w="w-[55px]" h="h-[20px]" cls="text-[12px] justify-center" />
        <svg width="10" height="10" viewBox="0 0 10 10" className="ml-[7px] mt-[8px] shrink-0"><path d="M9 1L1 9M9 5L5 9" stroke="#aaa" /></svg>
      </div>
    </div>
  );
}
